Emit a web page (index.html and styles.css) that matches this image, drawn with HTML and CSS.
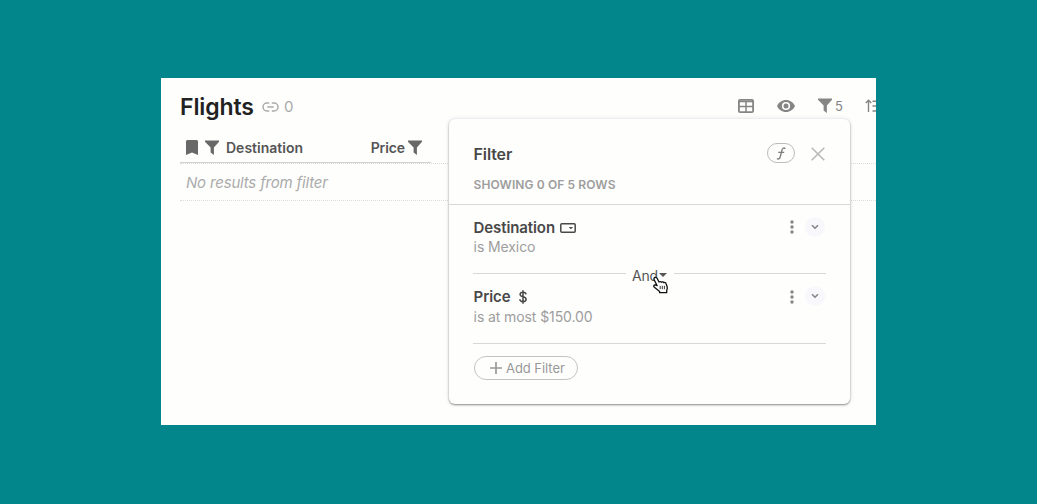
FILE: index.html
```html
<!DOCTYPE html>
<html lang="en">
<head>
<meta charset="utf-8">
<title>Flights</title>
<link rel="stylesheet" href="styles.css">
</head>
<body>
<svg class="defs" aria-hidden="true">
  <symbol id="funnel" viewBox="0 0 14 15"><path d="M0 .5h14v1.3L8.900 7.600V15L5.600 12.600V7.600L0 1.800z"/></symbol>
  <symbol id="dots" viewBox="0 0 4 14"><circle cx="2" cy="2" r="1.7"/><circle cx="2" cy="7" r="1.7"/><circle cx="2" cy="12" r="1.7"/></symbol>
  <symbol id="chevron" viewBox="0 0 8 6"><path d="M1 1.2l3 3 3-3" fill="none" stroke="currentColor" stroke-width="1.6"/></symbol>
</svg>
<main class="window">
  <header class="toolbar">
    <h1 class="title">Flights</h1>
    <svg class="link-icon" viewBox="0 0 17 10"><path d="M7.2 1H5a4 4 0 0 0 0 8h2.2M9.8 1H12a4 4 0 0 1 0 8H9.8M5.3 5h6.4" fill="none" stroke="currentColor" stroke-width="1.5"/></svg>
    <span class="link-count">0</span>
    <nav class="tools">
      <svg class="tool-table" viewBox="0 0 16 14"><rect x=".9" y=".9" width="14.2" height="12.2" rx="1.2" fill="none" stroke="currentColor" stroke-width="1.8"/><path d="M1 2.4h14M1 7.6h14M8 2v11" fill="none" stroke="currentColor" stroke-width="1.5"/></svg>
      <svg class="tool-eye" viewBox="0 0 18 12"><path fill-rule="evenodd" d="M9 0C5 0 1.6 2.4 0 6c1.6 3.6 5 6 9 6s7.400-2.400 9-6c-1.600-3.600-5-6-9-6zm0 1.900a4.100 4.100 0 1 1 0 8.200 4.100 4.100 0 0 1 0-8.200z"/><circle cx="9" cy="6" r="2.500"/></svg>
      <svg class="tool-funnel"><use href="#funnel"/></svg>
      <span class="tool-count">5</span>
      <svg class="tool-sort" viewBox="0 0 15 14"><path d="M3.500 13V1.500M.7 4l2.800-2.800L6.300 4M7.500 2.200H15M7.500 7H15M7.500 12H15" fill="none" stroke="currentColor" stroke-width="1.400"/></svg>
    </nav>
  </header>
  <section class="table">
    <div class="thead">
      <svg class="bookmark" viewBox="0 0 12 15"><path d="M0 1.500Q0 0 1.500 0h9Q12 0 12 1.500V15l-6-2.600L0 15z"/></svg>
      <svg class="funnel"><use href="#funnel"/></svg>
      <span class="col-name">Destination</span>
      <span class="col-price">Price</span>
      <svg class="funnel funnel-end"><use href="#funnel"/></svg>
    </div>
    <div class="empty"><span>No results from filter</span></div>
  </section>

  <aside class="panel">
    <header class="panel-head">
      <div class="panel-top">
        <h2 class="panel-title">Filter</h2>
        <button class="formula"><svg viewBox="0 0 10 13"><path d="M9.300 1.800C8.300.6 6.600.8 6.100 2.600L4.200 10c-.5 1.900-2 2.400-3.300 1.500M2.200 5.400h6" fill="none" stroke="currentColor" stroke-width="1.400"/></svg></button>
        <svg class="close" viewBox="0 0 14 14"><path d="M.7.7l12.600 12.600M13.300.7L.7 13.300" fill="none" stroke="currentColor" stroke-width="1.600"/></svg>
      </div>
      <p class="summary">SHOWING 0 OF 5 ROWS</p>
    </header>
    <div class="rule">
      <div class="rule-text">
        <h3 class="rule-name"><span>Destination</span><svg class="select-icon" viewBox="0 0 16 10"><rect x=".8" y=".8" width="14.400" height="8.400" rx="1" fill="none" stroke="currentColor" stroke-width="1.500"/><path d="M8.700 4h4.400l-2.200 2.200z"/></svg></h3>
        <p class="rule-value">is Mexico</p>
      </div>
      <svg class="dots"><use href="#dots"/></svg>
      <span class="expand"><svg><use href="#chevron"/></svg></span>
    </div>
    <div class="joiner"><i></i><span class="and">And<svg viewBox="0 0 8 4"><path d="M0 0h8L4 4z"/></svg></span><i></i></div>
    <div class="rule rule-second">
      <div class="rule-text">
        <h3 class="rule-name"><span>Price</span><svg class="dollar" viewBox="0 0 8 14"><path d="M7 4.400C6.900 3 5.700 2.300 4 2.300c-1.700 0-2.900.8-2.900 2.200C1.100 7.700 7.100 5.900 7.100 9.300c0 1.500-1.300 2.400-3.100 2.400S.9 10.900.8 9.300M4 .2v13.600" fill="none" stroke="currentColor" stroke-width="1.500"/></svg></h3>
        <p class="rule-value">is at most $150.00</p>
      </div>
      <svg class="dots"><use href="#dots"/></svg>
      <span class="expand"><svg><use href="#chevron"/></svg></span>
    </div>
    <button class="add"><svg viewBox="0 0 12 12"><path d="M6 0v12M0 6h12" fill="none" stroke="currentColor" stroke-width="1.700"/></svg><span>Add Filter</span></button>
  </aside>
  <svg class="cursor" viewBox="0 0 16 17"><path d="M1.200 1.500C2.100.3 3.500.7 4.100 1.800L6 5.500c.7-.7 1.900-.6 2.400.2.800-.6 1.900-.4 2.300.4 1-.5 2.100 0 2.400 1.100l1 3c.4 1.400.1 2.600-.4 3.600v2.400H6.600v-1.300L1.400 10.800C.2 9.900.8 8.300 2.200 8.400l2 .8L1.300 3.600c-.4-.7-.5-1.500-.1-2.100z" fill="#fff" stroke="#111" stroke-width="1.300" stroke-linejoin="round"/><path d="M7.200 9.300v3.400M9.300 9.300v3.400M11.400 9.300v3.400" stroke="#222" stroke-width=".9"/></svg>
</main>
</body>
</html>
```

FILE: styles.css
```css
* { box-sizing: border-box; }
body {
  margin: 0;
  height: 504px;
  padding: 78px 161px;
  overflow: hidden;
  background: #02868b;
  font-family: Inter, "Liberation Sans", sans-serif;
}
h1, h2, h3, p { margin: 0; }
svg { display: block; flex: none; fill: currentColor; }
button { padding: 0; background: none; font: inherit; }
.defs { position: absolute; width: 0; height: 0; }
.window {
  position: relative;
  width: 715px;
  height: 347px;
  overflow: hidden;
  background: #fefefd;
}

.toolbar { display: flex; align-items: center; height: 57px; padding-left: 19px; }
.title { width: 82px; font-size: 23px; line-height: 28px; font-weight: 600; letter-spacing: -.1px; color: #222; }
.link-icon { width: 17px; height: 10px; color: #aaa; }
.link-count { margin-left: 5px; font-size: 15px; color: #aaa; }
.tools { display: flex; align-items: center; margin-left: auto; padding-bottom: 2px; color: #858585; }
.tool-table { width: 16px; height: 14px; margin-right: 23px; }
.tool-eye { width: 18px; height: 12px; margin-right: 23px; }
.tool-funnel { width: 14px; height: 15px; }
.tool-count { width: 13px; margin-left: 3px; font-size: 13px; }
.tool-sort { width: 15px; height: 14px; margin: 0 -4px 0 17px; }

.table { padding-left: 19px; }
.thead {
  display: flex;
  align-items: center;
  width: 251px;
  height: 28px;
  padding: 0 0 2px 6px;
  border-bottom: 1px solid #d2d2d2;
  font-size: 14px;
  font-weight: 600;
  color: #555;
}
.bookmark { width: 12px; height: 15px; color: #686868; }
.funnel { width: 14px; height: 15px; margin-left: 7px; color: #686868; }
.col-name { margin-left: 7px; }
.col-price { margin-left: auto; letter-spacing: -.1px; }
.funnel-end { margin-left: 3px; margin-right: 9px; }
.empty {
  height: 38px;
  padding-left: 6px;
  border: dotted #dcdcdc;
  border-width: 1px 0;
  font-size: 15px;
  line-height: 37px;
  font-style: italic;
  letter-spacing: -.18px;
  color: #ababab;
}

.panel {
  position: absolute;
  left: 288px;
  top: 41px;
  width: 401px;
  height: 285px;
  border-radius: 6px;
  background: #fefefd;
  box-shadow: 0 1px 2px rgba(0, 0, 0, .42), 0 0 5px rgba(40, 40, 90, .13);
}
.panel-head { height: 86px; padding: 23px 25px 0 24.5px; border-bottom: 1px solid #d8d8d8; }
.panel-top { display: flex; align-items: center; height: 24px; }
.panel-title { margin-right: auto; font-size: 16px; font-weight: 600; letter-spacing: -.1px; color: #484848; }
.formula {
  display: flex;
  align-items: center;
  justify-content: center;
  width: 28px;
  height: 20px;
  margin: 0 16px 2px 0;
  border: 1px solid #bbb;
  border-radius: 10px;
  color: #808080;
}
.formula svg { width: 10px; height: 13px; }
.close { width: 14px; height: 14px; color: #b9b9b9; }
.summary { margin-top: 11px; font-size: 12px; line-height: 16px; font-weight: 600; letter-spacing: .1px; color: #9d9d9d; }

.rule { display: flex; height: 67px; margin: 0 24px; padding-top: 12px; }
.rule-text { flex: 1; padding-left: .6px; }
.rule-name { display: flex; align-items: center; height: 21px; font-size: 15px; font-weight: 600; letter-spacing: -.1px; color: #484848; }
.select-icon { width: 16px; height: 10px; margin-left: 5.500px; }
.dollar { width: 8px; height: 14px; margin-left: 8.500px; }
.rule-value { font-size: 14px; line-height: 18px; letter-spacing: -.1px; color: #9d9d9d; }
.dots { width: 4px; height: 14px; margin: 3px 11px 0 0; color: #858585; }
.expand {
  display: flex;
  align-items: center;
  justify-content: center;
  width: 20px;
  height: 20px;
  margin-right: 1px;
  border-radius: 50%;
  background: #f8f8fc;
  color: #858585;
}
.expand svg { width: 8px; height: 6px; }
.joiner { display: flex; height: 6px; margin: 0 24px; }
.joiner i { flex: 1; height: 1px; margin-top: 1px; background: #d8d8d8; }
.joiner i:first-child { flex: none; width: 153px; }
.and { display: flex; align-items: center; width: 48px; height: 6px; padding-left: 6px; font-size: 14px; letter-spacing: -.2px; color: #555; }
.and svg { width: 8px; height: 4px; margin-left: 1px; }
.rule-second { height: 66px; padding-top: 8px; border-bottom: 1px solid #d8d8d8; }
.rule-second .dots { margin-top: 4px; }
.rule-second .rule-value { line-height: 20px; }
.add {
  display: flex;
  align-items: center;
  width: 104px;
  height: 24px;
  margin: 12px 24.500px 0;
  padding-left: 15.500px;
  border: 1px solid #c4c4c4;
  border-radius: 12px;
  font-size: 13px;
  color: #999;
}
.add svg { width: 12px; height: 12px; margin-right: 4px; }
.add span { letter-spacing: -.05px; }
.cursor { position: absolute; left: 492px; top: 198px; width: 16px; height: 18px; }
```
